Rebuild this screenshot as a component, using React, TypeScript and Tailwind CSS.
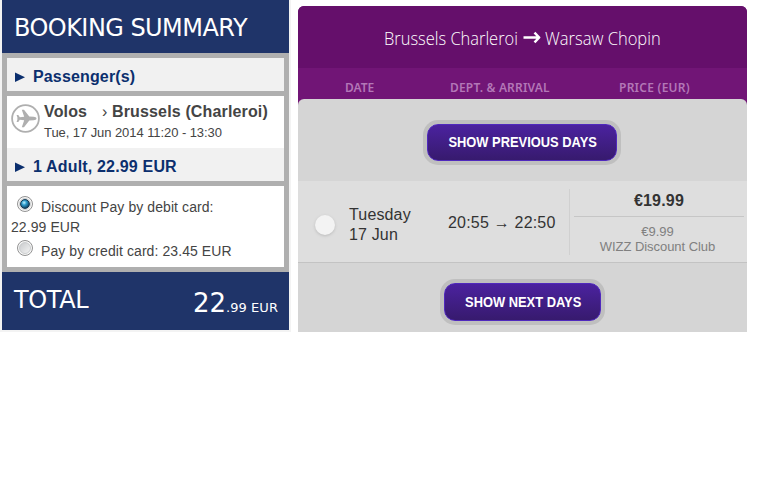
function Plane() {
  return (
    <svg className="h-[29px] w-[29px] shrink-0" viewBox="0 0 29 29" fill="none">
      <circle cx="14.5" cy="14.5" r="13.4" stroke="#afafaf" strokeWidth="1.8" />
      <path
        fill="#afafaf"
        d="M25.500 14.500c0 1-1.300 1.600-2.800 1.700l-4.400.2-5.300 6.800h-2.200l2.400-7-4.400-.5-1.500 2.300H5.600l1-3.200-1-.3 1-.3-1-3.200h1.700l1.500 2.300 4.400-.5-2.400-7H13l5.300 6.800 4.400.2c1.500.1 2.800.7 2.800 1.700z"
      />
    </svg>
  )
}

function Radio({ checked = false }: { checked?: boolean }) {
  return (
    <svg className="h-4 w-4 shrink-0" viewBox="0 0 16 16">
      <defs>
        <radialGradient id="blueDot" cx=".4" cy=".35" r=".65">
          <stop offset="0" stopColor="#c4f3ff" />
          <stop offset=".4" stopColor="#2f9fd0" />
          <stop offset="1" stopColor="#0a3a5a" />
        </radialGradient>
        <linearGradient id="greyDot" x1="0" y1="0" x2="1" y2="1">
          <stop offset="0" stopColor="#c8cacc" />
          <stop offset="1" stopColor="#f4f4f4" />
        </linearGradient>
      </defs>
      <circle cx="8" cy="8" r="7.5" fill="#f8f8f8" stroke="#929292" />
      <circle cx="8" cy="8" r="5.5" fill="url(#greyDot)" stroke="#c3c5c7" strokeWidth=".8" />
      {checked && <circle cx="8" cy="8" r="4.4" fill="url(#blueDot)" stroke="#153a55" strokeWidth="1" />}
    </svg>
  )
}

function Marker() {
  return (
    <svg className="ml-2 mr-2 h-[10px] w-[10px]" viewBox="0 0 10 10">
      <path d="M0 0.500L10 5.200L0 10z" fill="#0b2f6e" />
    </svg>
  )
}

function BookingSummary() {
  return (
    <aside className="h-[332px] w-[291px] bg-[#f3f3f3] pl-[2px] font-['Liberation_Sans',sans-serif]">
      <div className="w-[287px]">
        <header className="flex h-[53px] items-center bg-[#1f3469] pl-3 pt-[2px]">
          <h1 className="whitespace-nowrap font-['DejaVu_Sans',sans-serif] text-[24px] leading-none tracking-[-0.55px] text-white">
            BOOKING SUMMARY
          </h1>
        </header>

        <div className="flex h-[219px] flex-col gap-[5px] bg-[#afafaf] p-[5px]">
          <div className="flex h-[33px] items-center bg-[#f1f1f1] pt-1 text-[16px] font-bold tracking-[0.15px] text-[#0b2f6e]">
            <Marker />
            Passenger(s)
          </div>

          <section className="h-[85px] bg-white">
            <div className="flex h-[52px] pl-1 pt-[8px] text-[#444]">
              <Plane />
              <div className="ml-1 whitespace-nowrap">
                <div className="flex h-[16px] items-center text-[16px] font-bold leading-4 tracking-[0.15px]">
                  <span className="w-[58px]">Volos</span>
                  <span className="w-[10px] font-normal">›</span>
                  <span>Brussels (Charleroi)</span>
                </div>
                <p className="mt-1 text-[13px] leading-[17px] tracking-[-0.07px]">Tue, 17 Jun 2014 11:20 - 13:30</p>
              </div>
            </div>
            <div className="flex h-[33px] items-center bg-[#f1f1f1] pt-1 text-[16px] font-bold tracking-[0.17px] text-[#0b2f6e]">
              <Marker />
              1 Adult, 22.99 EUR
            </div>
          </section>

          <section className="h-[81px] whitespace-nowrap bg-white pl-1 text-[14px] leading-5 tracking-[0.08px] text-[#444]">
            <div className="flex h-[31px] pl-[6px] pt-[10px]">
              <Radio checked />
              <span className="ml-2 pt-[1px]">Discount Pay by debit card:</span>
            </div>
            <p>22.99 EUR</p>
            <div className="flex pl-[6px] pt-[3px]">
              <Radio />
              <span className="ml-2 pt-[1px]">Pay by credit card: 23.45 EUR</span>
            </div>
          </section>
        </div>

        <footer className="flex h-[58px] items-baseline justify-between bg-[#1f3469] pl-3 pr-[11px] pt-[11px] font-['DejaVu_Sans',sans-serif] text-white">
          <span className="text-[24px] leading-8 tracking-[-0.4px]">TOTAL</span>
          <span className="relative top-[4px] whitespace-nowrap">
            <span className="text-[26px] leading-8">22</span>
            <span className="text-[13px] tracking-[0.05px]">.99 EUR</span>
          </span>
        </footer>
      </div>
    </aside>
  )
}

function DaysButton({ label, className }: { label: string; className: string }) {
  return (
    <button
      className={`flex items-center justify-center rounded-[11px] border border-[#5029bd] bg-linear-to-b from-[#4b229f] to-[#371a6e] pl-[2px] text-[14px] font-bold text-white shadow-[0_0_0_4px_#bfbfbf] ${className}`}
    >
      <span className="block scale-x-[.92] whitespace-nowrap">{label}</span>
    </button>
  )
}

function FlightSelect() {
  return (
    <main className="mt-[6px] h-[326px] w-[449px] overflow-hidden rounded-t-[6px] bg-[#711576] font-['Liberation_Sans',sans-serif]">
      <header className="flex h-[62px] items-center bg-[#650f6b] pl-[86px] pt-[3px] font-['Open_Sans',sans-serif] text-[19px] font-light text-white">
        <span className="w-[139px] whitespace-nowrap">
          <span className="inline-block origin-left scale-x-[.865]">Brussels Charleroi</span>
        </span>
        <svg className="mr-1 h-4 w-[18px] shrink-0" viewBox="0 0 18 16" fill="none" stroke="white" strokeWidth="2.5">
          <path d="M0.500 6.500H16M11.500 1.700l4.700 4.800l-4.700 4.800" strokeLinejoin="round" />
        </svg>
        <span className="inline-block origin-left scale-x-[.87] whitespace-nowrap">Warsaw Chopin</span>
      </header>

      <div className="flex h-[31px] items-center whitespace-nowrap pl-[47px] pt-[8px] font-['Noto_Sans',sans-serif] text-[12px] font-semibold tracking-[0.18px] text-[#b377b7]">
        <span className="w-[105px] tracking-[0px]">DATE</span>
        <span className="w-[169px]">DEPT. &amp; ARRIVAL</span>
        <span className="tracking-[0.25px]">PRICE (EUR)</span>
      </div>

      <div className="h-[233px] rounded-t-[6px] bg-[#d5d5d5]">
        <div className="flex h-[82px] pl-[129px] pt-[25px]">
          <DaysButton label="SHOW PREVIOUS DAYS" className="h-[37px] w-[190px]" />
        </div>

        <div className="flex h-[82px] border-b border-[#c3c3c3] bg-[#dedede] text-[16px] text-[#333]">
          <div className="ml-[17px] mt-[34px] h-5 w-5 rounded-full bg-[#f3f3f3] shadow-[0_1px_3px_#bbb]" />
          <p className="ml-[14px] mt-[24px] w-[99px] leading-5 tracking-[0.15px]">
            Tuesday
            <br />
            17 Jun
          </p>
          <p className="mt-[32px] w-[121px] whitespace-nowrap leading-5 tracking-[0.2px]">20:55 → 22:50</p>
          <div className="mt-2 h-[66px] border-l border-[#d0d0d0] pl-1 text-center">
            <div className="h-[28px] w-[170px] border-b border-[#c6c6c6] text-[16px] font-bold leading-[23px] tracking-[0.2px]">
              €19.99
            </div>
            <p className="pr-[3px] pt-[7px] text-[13px] leading-[15px] tracking-[-0.05px] text-[#808080]">
              €9.99
              <br />
              WIZZ Discount Club
            </p>
          </div>
        </div>

        <div className="flex pl-[146px] pt-[20px]">
          <DaysButton label="SHOW NEXT DAYS" className="h-[38px] w-[157px]" />
        </div>
      </div>
    </main>
  )
}

export default function App() {
  return (
    <div className="flex h-[496px] w-[779px] gap-[7px] overflow-hidden bg-white">
      <BookingSummary />
      <FlightSelect />
    </div>
  )
}
